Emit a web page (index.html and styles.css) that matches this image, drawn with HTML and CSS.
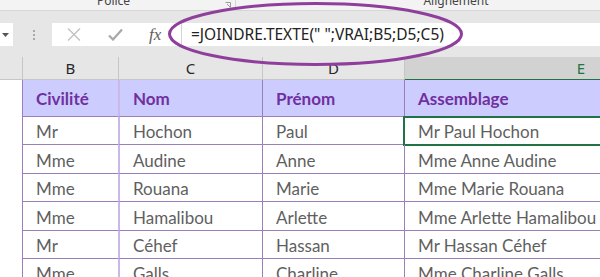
FILE: index.html
```html
<!DOCTYPE html>
<html lang="fr">
<head>
<meta charset="utf-8">
<title>JOINDRE.TEXTE</title>
<link rel="stylesheet" href="styles.css">
</head>
<body>
<div class="ribbon">
  <div class="group group-police"><span class="group-label">Police</span>
    <svg class="launcher" width="6" height="6" viewBox="0 0 6 6"><path d="M0.5 0.5h5v5" fill="none" stroke="#9a9a9a" stroke-width="1"/><path d="M2 2l3 3" stroke="#9a9a9a" stroke-width="1"/></svg>
  </div>
  <div class="group group-align"><span class="group-label">Alignement</span></div>
</div>
<div class="sheet-top">
  <div class="fbar">
    <div class="namebox">
      <svg width="7" height="4" viewBox="0 0 7 4"><path d="M0 0h7L3.5 4z" fill="#555"/></svg>
    </div>
    <div class="grip"><span></span><span></span><span></span></div>
    <div class="fxbox">
      <svg class="ico-x" width="14" height="13" viewBox="0 0 14 13"><path d="M1 0.5l12 12M13 0.5l-12 12" stroke="#c2c2c2" stroke-width="1.4"/></svg>
      <svg class="ico-ok" width="15" height="13" viewBox="0 0 15 13"><path d="M1 7.5l4 4L14 1.5" fill="none" stroke="#a8a8a8" stroke-width="2.2"/></svg>
      <span class="fx">fx</span>
    </div>
    <div class="finput">=JOINDRE.TEXTE(" ";VRAI;B5;D5;C5)</div>
  </div>
  <div class="colheads">
    <div class="ch corner"></div>
    <div class="ch">B</div>
    <div class="ch">C</div>
    <div class="ch">D</div>
    <div class="ch ch-sel">E</div>
  </div>
</div>
<div class="grid">
  <div class="rh"></div>
  <div class="c hd cb">Civilité</div>
  <div class="c hd">Nom</div>
  <div class="c hd">Prénom</div>
  <div class="c hd">Assemblage</div>

  <div class="rh"></div>
  <div class="c cb">Mr</div><div class="c">Hochon</div><div class="c">Paul</div><div class="c active">Mr Paul Hochon</div>
  <div class="rh"></div>
  <div class="c cb">Mme</div><div class="c">Audine</div><div class="c">Anne</div><div class="c">Mme Anne Audine</div>
  <div class="rh"></div>
  <div class="c cb">Mme</div><div class="c">Rouana</div><div class="c">Marie</div><div class="c">Mme Marie Rouana</div>
  <div class="rh"></div>
  <div class="c cb">Mme</div><div class="c">Hamalibou</div><div class="c">Arlette</div><div class="c">Mme Arlette Hamalibou</div>
  <div class="rh"></div>
  <div class="c cb">Mr</div><div class="c">Céhef</div><div class="c">Hassan</div><div class="c">Mr Hassan Céhef</div>
  <div class="rh"></div>
  <div class="c cb">Mme</div><div class="c">Galls</div><div class="c">Charline</div><div class="c">Mme Charline Galls</div>
</div>
<svg class="circle" width="600" height="277" viewBox="0 0 600 277"><ellipse cx="315.5" cy="34" rx="146" ry="30.5" fill="none" stroke="#8f3f9b" stroke-width="3"/></svg>
</body>
</html>
```
FILE: styles.css
```css
html, body { margin: 0; padding: 0; }
body {
  width: 600px;
  height: 277px;
  overflow: hidden;
  position: relative;
  background: #ffffff;
  font-family: "Noto Sans", "Open Sans", sans-serif;
}
.ribbon {
  height: 10px;
  background: #f3f3f3;
  border-bottom: 1px solid #d6d6d6;
  display: flex;
  overflow: hidden;
}
.group {
  position: relative;
  flex: none;
  text-align: center;
  font-size: 12px;
  line-height: 12px;
  color: #444444;
}
.group-label { display: block; margin-top: -5px; }
.group-police { width: 236px; padding-right: 8px; box-sizing: border-box; border-right: 1px solid #d6d6d6; }
.group-align { width: 440px; }
.launcher { position: absolute; right: 4px; top: 2px; }

.sheet-top {
  background: #e6e6e6;
  padding-top: 12px;
}
.fbar {
  display: flex;
  height: 23px;
}
.namebox {
  width: 13px;
  background: #ffffff;
  display: flex;
  align-items: center;
  padding-left: 2px;
  box-sizing: border-box;
}
.grip {
  width: 39px;
  display: flex;
  flex-direction: column;
  align-items: center;
  justify-content: center;
  gap: 2px;
  padding-left: 2px;
  box-sizing: border-box;
}
.grip span { width: 2px; height: 2px; background: #a8a8a8; }
.fxbox {
  width: 130px;
  background: #ffffff;
  border-right: 1px solid #d4d4d4;
  display: flex;
  align-items: center;
  padding-left: 15px;
  box-sizing: border-box;
}
.ico-x { margin-right: 27px; }
.ico-ok { margin-right: 26px; }
.fx {
  font-family: "Liberation Serif", serif;
  font-style: italic;
  font-size: 17px;
  color: #606060;
  line-height: 23px;
}
.finput {
  flex: 1;
  background: #ffffff;
  padding-left: 9px;
  font-size: 15.5px;
  line-height: 23px;
  color: #222222;
  white-space: pre;
}
.colheads {
  margin-top: 11px;
  display: grid;
  grid-template-columns: 22px 96px 144px 142px 346px;
  height: 23px;
  border-bottom: 1px solid #c6c6c6;
  box-sizing: border-box;
}
.ch {
  border-left: 1px solid #c6c6c6;
  text-align: center;
  font-size: 15px;
  line-height: 22px;
  color: #262626;
}
.ch.corner { border-left: none; }
.ch-sel {
  background: #d2d2d2;
  color: #217346;
  border-bottom: 2px solid #217346;
  margin-bottom: -1px;
  text-align: right;
  padding-right: 165px;
}

.grid {
  display: grid;
  grid-template-columns: 22px 96px 144px 142px 346px;
  grid-template-rows: 37px repeat(6, 28.4px);
  font-family: "Lato", "Open Sans", sans-serif;
}
.rh { background: #ffffff; }
.c {
  border-left: 1px solid #9a7fba;
  border-bottom: 1px solid #9a7fba;
  display: flex;
  align-items: flex-end;
  padding: 0 0 2px 13px;
  font-size: 17px;
  line-height: 20px;
  color: #5f5f5f;
  white-space: nowrap;
  overflow: hidden;
}
.grid > .c:nth-child(5n+3) { border-left: 2px solid #cbb8ea; padding-left: 13px; }
.hd {
  background: #ccccff;
  color: #7030a0;
  font-weight: bold;
  align-items: center;
  padding-bottom: 0;
  padding-top: 2px;
}
.active {
  outline: 2px solid #217346;
  outline-offset: -1px;
}
.circle {
  position: absolute;
  left: 0;
  top: 0;
  pointer-events: none;
}
```
